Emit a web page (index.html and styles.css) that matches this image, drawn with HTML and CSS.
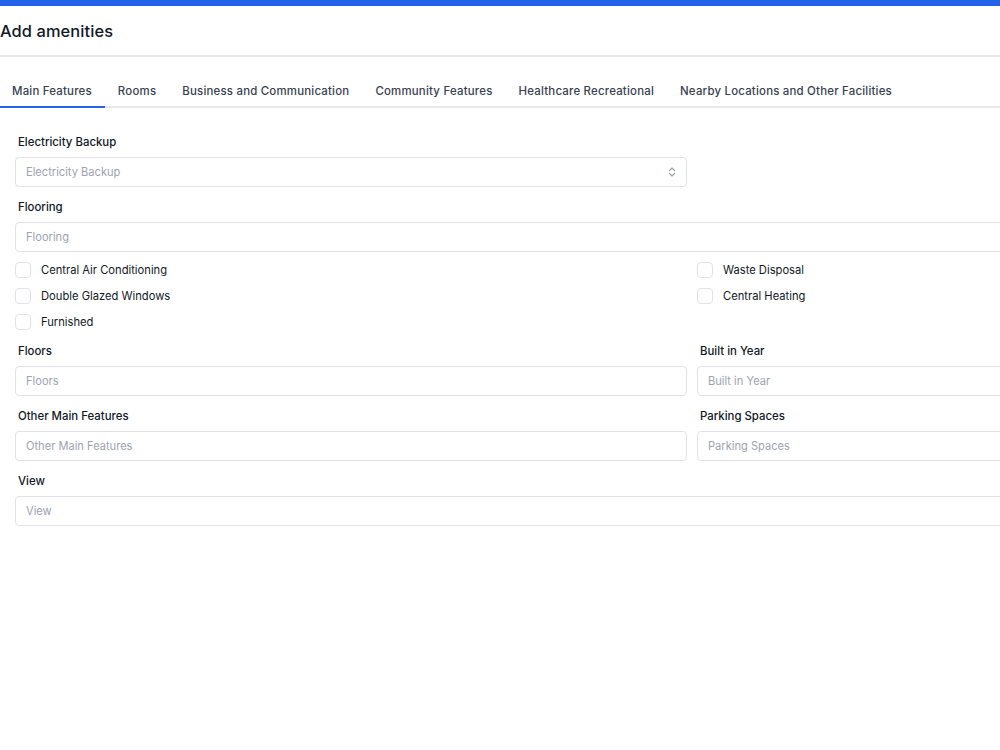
FILE: index.html
```html
<!DOCTYPE html>
<html lang="en">
<head>
<meta charset="utf-8">
<title>Add amenities</title>
<link rel="stylesheet" href="styles.css">
</head>
<body>
<div class="topbar"></div>
<div class="page">
  <header class="header"><h1 class="title">Add amenities</h1></header>
  <nav class="tabs">
    <a class="tab active">Main Features</a>
    <a class="tab">Rooms</a>
    <a class="tab">Business and Communication</a>
    <a class="tab">Community Features</a>
    <a class="tab">Healthcare Recreational</a>
    <a class="tab">Nearby Locations and Other Facilities</a>
  </nav>
  <form class="form">
    <div class="grid">
      <div class="field">
        <label class="label">Electricity Backup</label>
        <div class="select">
          <span class="ph">Electricity Backup</span>
          <svg class="chev" width="8" height="12" viewBox="0 0 8 12"><path d="M1.5 4.5 L4 2 L6.5 4.5 M1.5 7.5 L4 10 L6.5 7.5" fill="none" stroke="#9ca3af" stroke-width="1.2" stroke-linecap="round" stroke-linejoin="round"/></svg>
        </div>
      </div>
      <div></div>
      <div class="field span2">
        <label class="label">Flooring</label>
        <input class="input" placeholder="Flooring">
      </div>
      <div class="checks">
        <label class="check"><span class="box"></span>Central Air Conditioning</label>
        <label class="check"><span class="box"></span>Double Glazed Windows</label>
        <label class="check"><span class="box"></span>Furnished</label>
      </div>
      <div class="checks">
        <label class="check"><span class="box"></span>Waste Disposal</label>
        <label class="check"><span class="box"></span>Central Heating</label>
      </div>
      <div class="field">
        <label class="label">Floors</label>
        <input class="input" placeholder="Floors">
      </div>
      <div class="field">
        <label class="label">Built in Year</label>
        <input class="input" placeholder="Built in Year">
      </div>
      <div class="field">
        <label class="label">Other Main Features</label>
        <input class="input" placeholder="Other Main Features">
      </div>
      <div class="field">
        <label class="label">Parking Spaces</label>
        <input class="input" placeholder="Parking Spaces">
      </div>
      <div class="field span2">
        <label class="label">View</label>
        <input class="input" placeholder="View">
      </div>
    </div>
  </form>
</div>
</body>
</html>
```
FILE: styles.css
```css
html, body {
  margin: 0;
  padding: 0;
  overflow: hidden;
  background: #ffffff;
}
body {
  font-family: Inter, "Helvetica Neue", Arial, sans-serif;
  color: #111827;
  width: 1000px;
  height: 750px;
}
.topbar {
  height: 6px;
  background: #2563eb;
}
.page {
  width: 1370px;
}
.header {
  height: 49px;
  border-bottom: 2px solid #e5e7eb;
  display: flex;
  align-items: center;
}
.title {
  margin: 0;
  font-size: 16.4px;
  font-weight: 500;
  letter-spacing: 0.1px;
  color: #111827;
}
.tabs {
  margin-top: 17px;
  display: flex;
  border-bottom: 2px solid #e5e7eb;
}
.tab {
  box-sizing: border-box;
  height: 34px;
  padding: 1px 13px 0;
  display: flex;
  align-items: center;
  font-size: 11.45px;
  font-weight: 500;
  color: #374151;
  letter-spacing: 0.2px;
  margin-bottom: -2px;
  border-bottom: 2px solid transparent;
}
.tab.active {
  border-bottom-color: #2563eb;
  padding: 1px 13px 0 12px;
}
.form {
  padding: 25px 0 0 15px;
}
.grid {
  display: grid;
  grid-template-columns: 672px 672px;
  column-gap: 10px;
  row-gap: 11px;
}
.span2 {
  grid-column: 1 / 3;
}
.field {
  display: flex;
  flex-direction: column;
}
.label {
  font-size: 11.4px;
  font-weight: 500;
  line-height: 16px;
  color: #111827;
  margin: 1px 0 7px 3px;
}
.input, .select {
  box-sizing: border-box;
  height: 30px;
  border: 1px solid #dfe2e6;
  border-radius: 4px;
  padding: 0 10px;
  font-family: inherit;
  font-size: 11.1px;
  color: #111827;
  background: #fff;
  outline: none;
}
.input::placeholder, .ph {
  color: #9ca3af;
}
.select {
  display: flex;
  align-items: center;
  justify-content: space-between;
  padding-right: 10px;
}
.chev {
  display: block;
}
.checks {
  display: flex;
  flex-direction: column;
  gap: 10px;
  margin: -1px 0 1px;
}
.check {
  display: flex;
  align-items: center;
  gap: 10px;
  font-size: 11.2px;
  line-height: 16px;
  color: #111827;
}
.box {
  box-sizing: border-box;
  width: 16px;
  height: 16px;
  border: 1px solid #dfe2e6;
  border-radius: 4px;
  background: #fff;
}
```
